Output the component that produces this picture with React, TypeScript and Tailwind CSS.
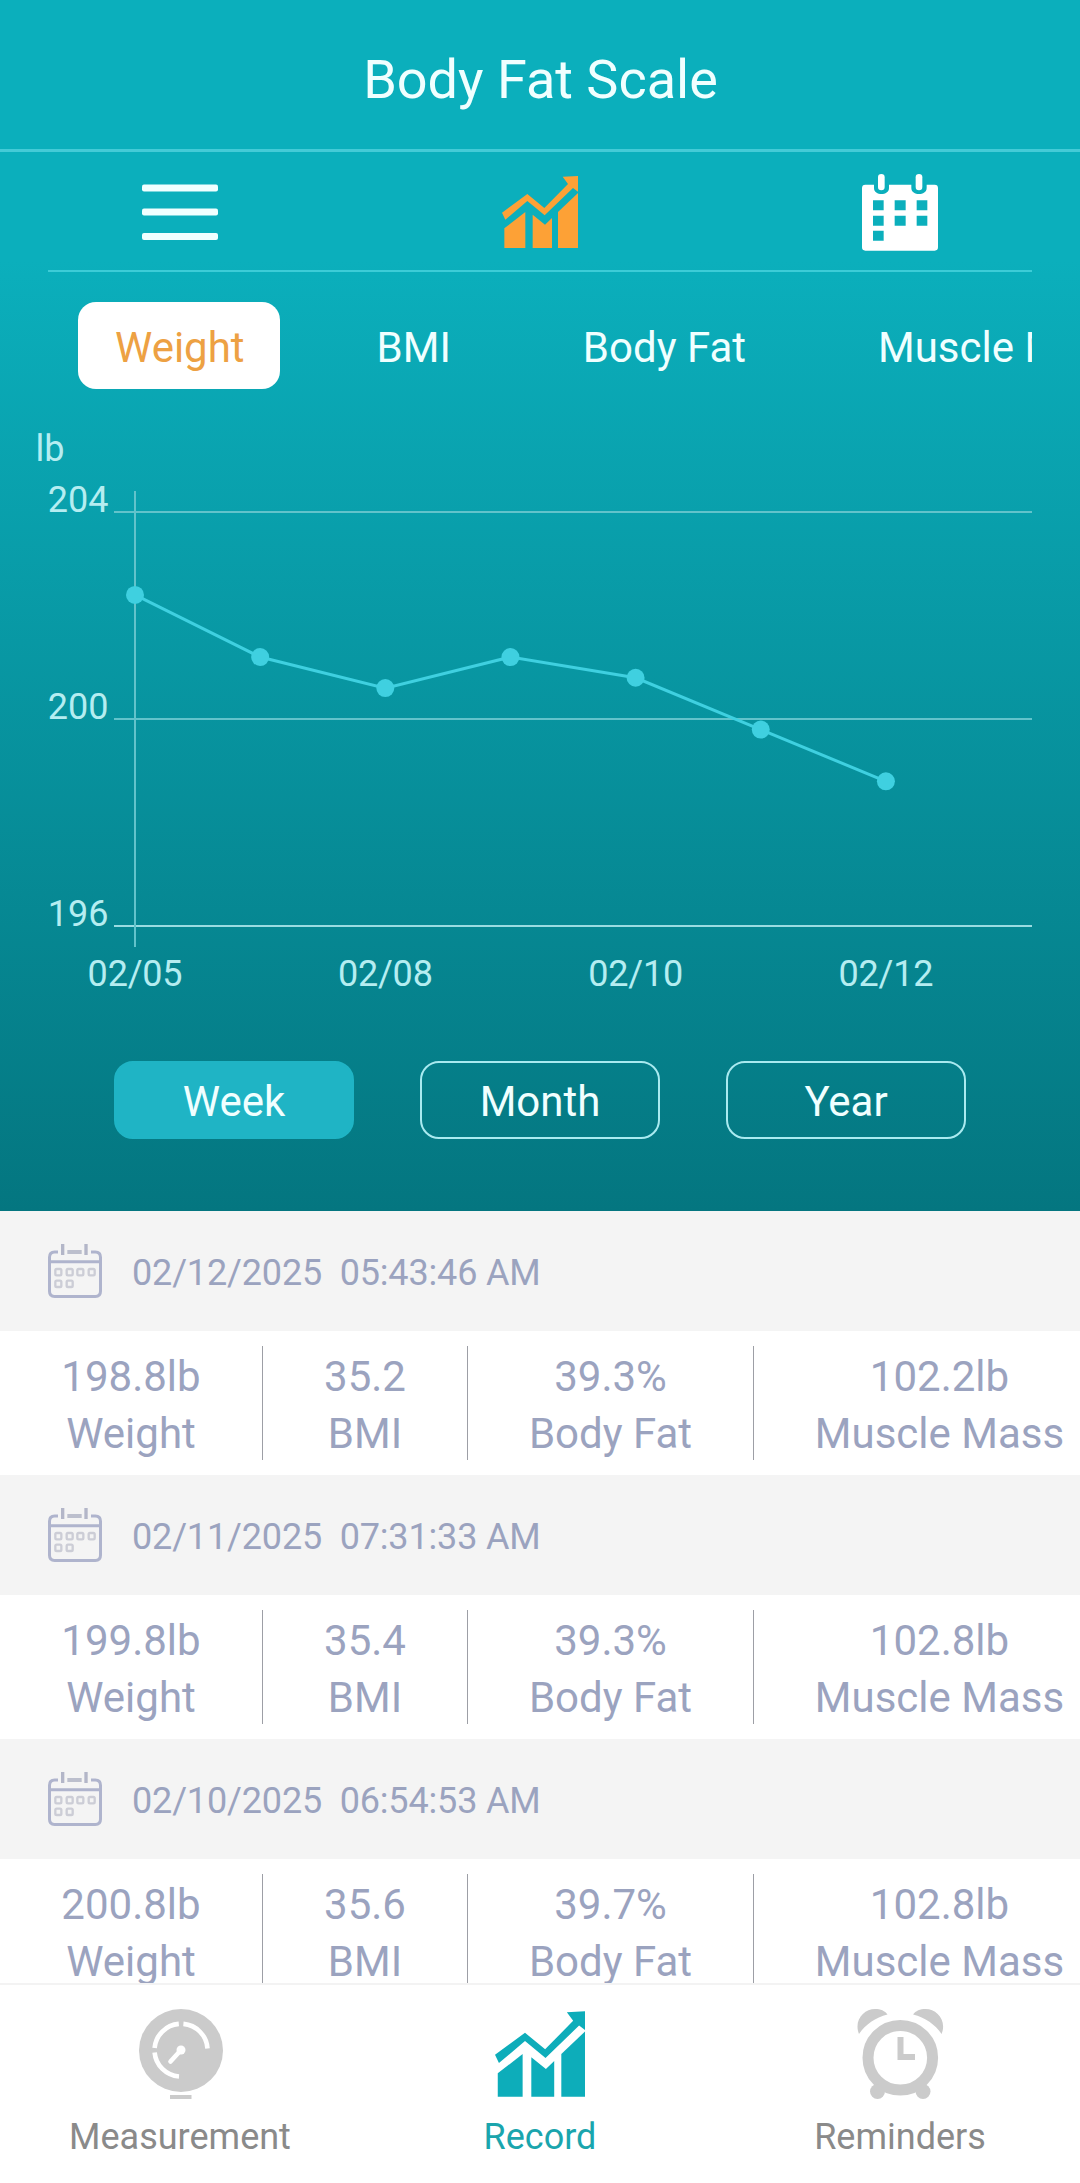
import { useState } from "react";
import clsx from "clsx";

type Point = { date: string; value: number };

type Entry = {
  date: string;
  time: string;
  weight: string;
  bmi: string;
  bodyFat: string;
  muscle: string;
};

const METRICS = ["Weight", "BMI", "Body Fat", "Muscle Mass"];
const RANGES = ["Week", "Month", "Year"];

const POINTS: Point[] = [
  { date: "02/05", value: 202.4 },
  { date: "02/07", value: 201.2 },
  { date: "02/08", value: 200.6 },
  { date: "02/09", value: 201.2 },
  { date: "02/10", value: 200.8 },
  { date: "02/11", value: 199.8 },
  { date: "02/12", value: 198.8 },
];

const ENTRIES: Entry[] = [
  { date: "02/12/2025", time: "05:43:46 AM", weight: "198.8lb", bmi: "35.2", bodyFat: "39.3%", muscle: "102.2lb" },
  { date: "02/11/2025", time: "07:31:33 AM", weight: "199.8lb", bmi: "35.4", bodyFat: "39.3%", muscle: "102.8lb" },
  { date: "02/10/2025", time: "06:54:53 AM", weight: "200.8lb", bmi: "35.6", bodyFat: "39.7%", muscle: "102.8lb" },
];

function MenuIcon() {
  return (
    <svg width="76" height="56" viewBox="0 0 76 56" fill="#f0ffff">
      <rect y="0.5" width="76" height="7" rx="2" />
      <rect y="24.5" width="76" height="7" rx="2" />
      <rect y="49" width="76" height="7" rx="2" />
    </svg>
  );
}

function TrendIcon({ className }: { className: string }) {
  return (
    <svg className={className} viewBox="66 48 228 216" fill="currentColor">
      <path d="M66 158 142 102 193 144 264 72 248 50 294 48V95L279 84 194 166 142 123 76 179Z" />
      <path d="M73 205 136 156V264H73Z" />
      <path d="M158 164 195 194 216 174V264H158Z" />
      <path d="M234 156 294 99V264H234Z" />
    </svg>
  );
}

function CalendarSolidIcon() {
  return (
    <svg width="76" height="77" viewBox="66 40 228 231" fill="#fff">
      <path
        fillRule="evenodd"
        d="M76 72H102V82C102 106 147 106 147 82V72H214V82C214 106 260 106 260 82V72H284Q294 72 294 82V260Q294 270 284 270H76Q66 270 66 260V82Q66 72 76 72ZM99 119V149H131V119ZM164 119V149H197V119ZM230 119V149H262V119ZM99 165V195H131V165ZM164 165V195H197V165ZM230 165V195H262V165ZM99 210V240H131V210Z"
      />
      <rect x="114" y="40" width="20" height="49" rx="10" />
      <rect x="227" y="40" width="20" height="49" rx="10" />
    </svg>
  );
}

function CalendarOutlineIcon() {
  const cells = [
    [85, 126],
    [119, 126],
    [151, 126],
    [185, 126],
    [85, 161],
    [119, 161],
  ];
  return (
    <svg width="54" height="54" viewBox="54 42 162 162" fill="none" stroke="#afb4cd" strokeWidth="9">
      <path d="M84 66H74Q58.500 66 58.500 82V184Q58.500 199.500 74 199.500H196Q211.500 199.500 211.500 184V82Q211.500 66 196 66H183" />
      <path d="M112 66H155" strokeWidth="12" stroke="#bcbfcd" />
      <path d="M98 42V75M168 42V75" strokeWidth="10" stroke="#b3b6c8" />
      <path d="M58 95H212" />
      {cells.map(([x, y]) => (
        <rect key={`${x}-${y}`} x={x - 9} y={y - 9} width="18" height="19" rx="4" strokeWidth="7" stroke="#cccdd6" />
      ))}
    </svg>
  );
}

function GaugeIcon() {
  return (
    <svg width="84" height="90" viewBox="0 0 84 90" fill="none" className="ml-[2px]">
      <ellipse cx="42" cy="41.5" rx="42" ry="41.5" fill="#cbcbcb" />
      <rect x="31" y="86" width="21.5" height="4" fill="#cbcbcb" />
      <g stroke="#fff" strokeWidth="4.6">
        <path d="M15.6 39A26.5 26.5 0 0 1 39.8 14.9" />
        <path d="M44.4 14.9A26.5 26.5 0 0 1 68.5 39.5" />
        <path d="M15.6 43.5A26.5 26.5 0 0 0 40 67.5" />
        <path d="M42 41 31.5 52.5" strokeLinecap="round" />
      </g>
      <circle cx="42" cy="41" r="4.5" fill="#fff" />
    </svg>
  );
}

function AlarmIcon() {
  return (
    <svg width="87" height="90" viewBox="0 0 87 90" fill="#cbcbcb">
      <circle cx="43.3" cy="48.7" r="32.3" fill="none" stroke="#cbcbcb" strokeWidth="11" />
      <path d="M2 25C-3.5 11 7 0 18 0 23.5 0 28 1.8 30.5 5.5 18.5 8.5 8.5 15.5 2 25Z" />
      <path d="M84.6 25C90.1 11 79.6 0 68.6 0 63.1 0 58.6 1.8 56.1 5.5 68.1 8.5 78.1 15.5 84.6 25Z" />
      <circle cx="20.5" cy="82.5" r="7.5" />
      <circle cx="66" cy="82.5" r="7.5" />
      <path d="M40.5 28H46.5V45H58V51H40.5Z" />
    </svg>
  );
}

function WeightChart({ points }: { points: Point[] }) {
  const x = (i: number) => 135 + i * 125.15;
  const y = (value: number) => 123 + (204 - value) * 51.8;
  const line = points.map((p, i) => `${x(i)},${y(p.value)}`).join(" ");

  return (
    <svg width="1080" height="672" viewBox="0 0 1080 672" className="block text-[36px]">
      <text x="35.5" y="72" fill="#b5edf1">lb</text>
      {[204, 200, 196].map((tick) => (
        <g key={tick}>
          <text x="108.5" y={y(tick)} textAnchor="end" fill="#b5edf1">
            {tick}
          </text>
          <rect
            x="114"
            y={Math.round(y(tick)) - 1}
            width="918"
            height="2"
            fill={tick === 196 ? "#9adce2" : "#62c3cb"}
          />
        </g>
      ))}
      <rect x="134" y="102" width="2" height="456" fill="#62c3cb" />
      <polyline points={line} fill="none" stroke="#3fd0e0" strokeWidth="3" />
      {points.map((p, i) => (
        <g key={p.date}>
          <circle cx={x(i)} cy={y(p.value)} r="9" fill="#3fd0e0" />
          {i % 2 === 0 && (
            <text x={x(i)} y="597" textAnchor="middle" fill="#b5edf1" className="tracking-[-0.2px]">
              {p.date}
            </text>
          )}
        </g>
      ))}
    </svg>
  );
}

function EntryCell({ value, label, className }: { value: string; label: string; className: string }) {
  return (
    <div className={clsx("h-[114px] shrink-0 pt-[2px] text-center text-[42px] leading-[57px] whitespace-nowrap", className)}>
      <div>{value}</div>
      <div>{label}</div>
    </div>
  );
}

function EntryRow({ entry }: { entry: Entry }) {
  return (
    <article className="text-[#9ba3bf]">
      <div className="flex h-[120px] items-center gap-[30px] bg-[#f4f4f4] pl-12">
        <CalendarOutlineIcon />
        <div className="pt-[3px] text-[36px] tracking-[-0.15px] whitespace-pre">{`${entry.date}  ${entry.time}`}</div>
      </div>
      <div className="flex h-36 items-center overflow-hidden bg-white">
        <EntryCell value={entry.weight} label="Weight" className="w-[263px] border-r border-[#9d9fa6]" />
        <EntryCell value={entry.bmi} label="BMI" className="w-[205px] border-r border-[#9d9fa6]" />
        <EntryCell value={entry.bodyFat} label="Body Fat" className="w-[286px] border-r border-[#9d9fa6]" />
        <EntryCell value={entry.muscle} label="Muscle Mass" className="w-[371px]" />
      </div>
    </article>
  );
}

export default function App() {
  const [metric, setMetric] = useState("Weight");
  const [range, setRange] = useState("Week");

  return (
    <div className="flex h-[2183px] w-[1080px] flex-col overflow-hidden bg-white font-['Roboto',sans-serif]">
      <section className="shrink-0 bg-[linear-gradient(to_bottom,#0bafbc_0px,#0bafbc_260px,#047680_1211px)] text-[#f0ffff]">
        <header className="flex h-[152px] items-center justify-center border-b-[3px] border-[#44cbd7] pt-[10px]">
          <h1 className="pl-px text-[54px] leading-none">Body Fat Scale</h1>
        </header>

        <div className="grid h-[118px] grid-cols-3 place-items-center pt-[2px]">
          <MenuIcon />
          <TrendIcon className="h-[72px] w-[76px] text-[#fda136]" />
          <CalendarSolidIcon />
        </div>
        <div className="mx-12 h-[2px] bg-[#3dccd7]" />

        <div className="mx-12 mt-[30px] flex gap-[60px] overflow-hidden pl-[30px]">
          {METRICS.map((m) => (
            <button
              key={m}
              onClick={() => setMetric(m)}
              className={clsx(
                "h-[87px] shrink-0 rounded-[18px] pt-1 pr-[35px] pl-[37px] text-[42px] whitespace-nowrap",
                m === metric && "bg-white text-[#eda143]",
              )}
            >
              {m}
            </button>
          ))}
        </div>

        <WeightChart points={POINTS} />

        <div className="flex justify-center gap-[66px] pb-[72px]">
          {RANGES.map((r) => (
            <button
              key={r}
              onClick={() => setRange(r)}
              className={clsx(
                "h-[78px] w-[240px] rounded-[19px] border-2 pt-[3px] text-[42px] leading-none",
                r === range ? "border-[#1fb4c5] bg-[#1fb4c5]" : "border-[#a9eaf0]",
              )}
            >
              {r}
            </button>
          ))}
        </div>
      </section>

      <main className="min-h-0 flex-1 overflow-hidden">
        {ENTRIES.map((entry) => (
          <EntryRow key={entry.date} entry={entry} />
        ))}
      </main>

      <nav className="grid h-[200px] shrink-0 grid-cols-3 border-t-2 border-[#f3f3f3] bg-white text-[36px] leading-[42px] text-[#8a8a8a]">
        <a className="flex flex-col items-center gap-[17px] pt-6">
          <GaugeIcon />
          <span>Measurement</span>
        </a>
        <a className="flex flex-col items-center gap-[17px] pt-6 text-[#1aa5ad]">
          <div className="flex h-[90px] items-center">
            <TrendIcon className="h-[86px] w-[90px] text-[#0dadba]" />
          </div>
          <span>Record</span>
        </a>
        <a className="flex flex-col items-center gap-[17px] pt-6">
          <AlarmIcon />
          <span>Reminders</span>
        </a>
      </nav>
    </div>
  );
}
